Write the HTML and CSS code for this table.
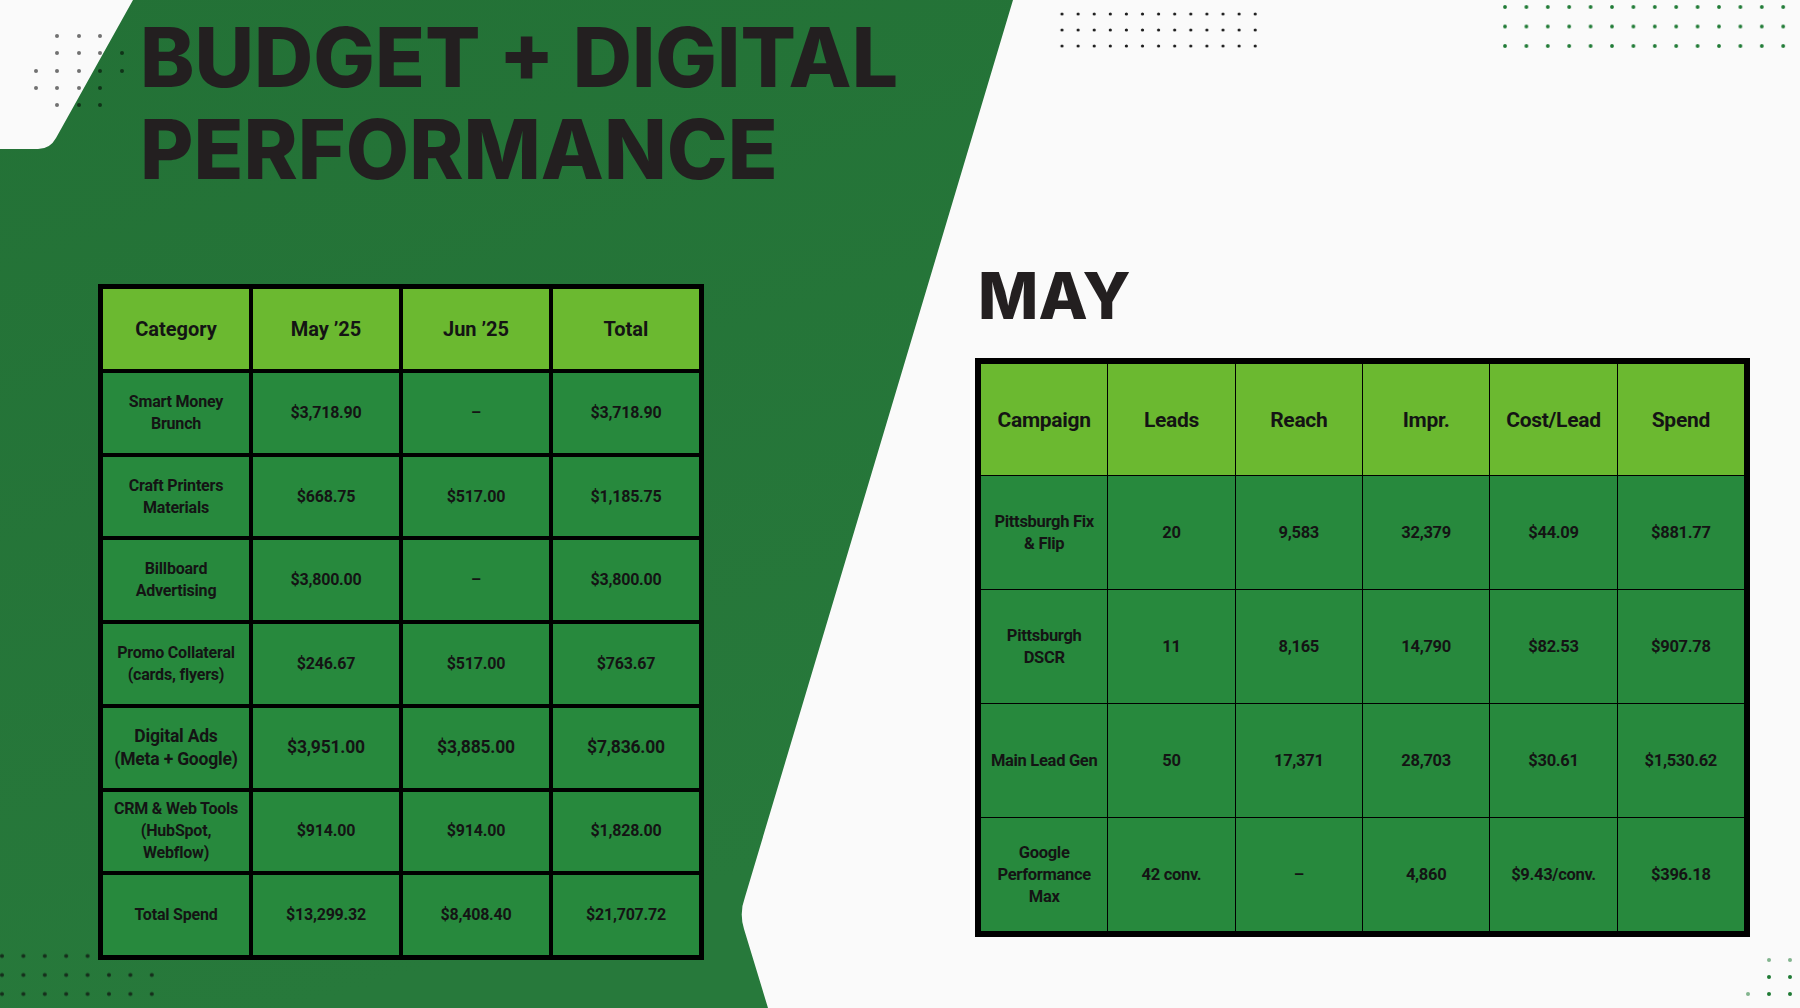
FILE: index.html
```html
<!DOCTYPE html>
<html lang="en">
<head>
<meta charset="utf-8">
<title>Budget + Digital Performance</title>
<link rel="stylesheet" href="styles.css">
</head>
<body>
<div class="slide">
  <svg class="bg" width="1800" height="1008" viewBox="0 0 1800 1008" aria-hidden="true">
    <defs>
      <linearGradient id="g" x1="0" y1="0" x2="0.3" y2="1">
        <stop offset="0" stop-color="#237136"/>
        <stop offset="1" stop-color="#27793b"/>
      </linearGradient>
      <pattern id="pm" x="1054" y="6" width="16.1" height="16" patternUnits="userSpaceOnUse"><circle cx="8" cy="8" r="1.6" fill="#1d1d1d"/></pattern>
      <pattern id="pr" x="1494.3" y="-2.75" width="21.4" height="19.5" patternUnits="userSpaceOnUse"><circle cx="10.7" cy="9.75" r="1.9" fill="#1f7a35"/></pattern>
      <pattern id="pb" x="-8.7" y="946.5" width="21.4" height="19" patternUnits="userSpaceOnUse"><circle cx="10.7" cy="9.5" r="2" fill="#152e1b"/></pattern>
    </defs>
    <path d="M133 0 L1013 0 L745 897 Q739 913 744 929 L768 1008 L0 1008 L0 149 L38 149 Q50 149 56 138 Z" fill="url(#g)"/>
    <g fill="#000" fill-opacity="0.55">
      <circle cx="57" cy="36" r="2"/><circle cx="79" cy="36" r="2"/><circle cx="100" cy="36" r="2"/>
      <circle cx="57" cy="53" r="2"/><circle cx="79" cy="53" r="2"/><circle cx="100" cy="53" r="2"/><circle cx="122" cy="53" r="2"/>
      <circle cx="36" cy="71" r="2"/><circle cx="57" cy="71" r="2"/><circle cx="79" cy="71" r="2"/><circle cx="100" cy="71" r="2"/><circle cx="122" cy="71" r="2"/>
      <circle cx="36" cy="88" r="2"/><circle cx="57" cy="88" r="2"/><circle cx="79" cy="88" r="2"/><circle cx="100" cy="88" r="2"/>
      <circle cx="57" cy="105" r="2"/><circle cx="79" cy="105" r="2"/><circle cx="100" cy="105" r="2"/>
    </g>
    <rect x="1054" y="6" width="209.3" height="48" fill="url(#pm)"/>
    <rect x="1494.3" y="-2.75" width="299.6" height="58.5" fill="url(#pr)"/>
    <rect x="-8.7" y="946.5" width="107" height="19" fill="url(#pb)"/>
    <rect x="-8.7" y="965.5" width="171.2" height="38" fill="url(#pb)"/>
    <g fill="#1f7a35">
      <circle cx="1769" cy="960" r="2" fill-opacity="0.55"/><circle cx="1790" cy="960" r="2" fill-opacity="0.55"/>
      <circle cx="1769" cy="977" r="2"/><circle cx="1790" cy="977" r="2"/>
      <circle cx="1748" cy="994" r="2" fill-opacity="0.55"/><circle cx="1769" cy="994" r="2"/><circle cx="1790" cy="994" r="2"/>
    </g>
  </svg>

  <div class="content">
    <section class="budget">
      <h1 class="title">BUDGET + DIGITAL<br>PERFORMANCE</h1>
      <div class="grid budget-table">
        <div class="cell head">Category</div>
        <div class="cell head">May ’25</div>
        <div class="cell head">Jun ’25</div>
        <div class="cell head">Total</div>

        <div class="cell">Smart Money<br>Brunch</div>
        <div class="cell">$3,718.90</div>
        <div class="cell">–</div>
        <div class="cell">$3,718.90</div>

        <div class="cell">Craft Printers<br>Materials</div>
        <div class="cell">$668.75</div>
        <div class="cell">$517.00</div>
        <div class="cell">$1,185.75</div>

        <div class="cell">Billboard<br>Advertising</div>
        <div class="cell">$3,800.00</div>
        <div class="cell">–</div>
        <div class="cell">$3,800.00</div>

        <div class="cell">Promo Collateral<br>(cards, flyers)</div>
        <div class="cell">$246.67</div>
        <div class="cell">$517.00</div>
        <div class="cell">$763.67</div>

        <div class="cell big">Digital Ads<br>(Meta + Google)</div>
        <div class="cell big">$3,951.00</div>
        <div class="cell big">$3,885.00</div>
        <div class="cell big">$7,836.00</div>

        <div class="cell">CRM &amp; Web Tools<br>(HubSpot,<br>Webflow)</div>
        <div class="cell">$914.00</div>
        <div class="cell">$914.00</div>
        <div class="cell">$1,828.00</div>

        <div class="cell">Total Spend</div>
        <div class="cell">$13,299.32</div>
        <div class="cell">$8,408.40</div>
        <div class="cell">$21,707.72</div>
      </div>
    </section>

    <section class="may">
      <h2 class="may-title">MAY</h2>
      <div class="grid camp-table">
        <div class="cell head">Campaign</div>
        <div class="cell head">Leads</div>
        <div class="cell head">Reach</div>
        <div class="cell head">Impr.</div>
        <div class="cell head">Cost/Lead</div>
        <div class="cell head">Spend</div>

        <div class="cell">Pittsburgh Fix<br>&amp; Flip</div>
        <div class="cell">20</div>
        <div class="cell">9,583</div>
        <div class="cell">32,379</div>
        <div class="cell">$44.09</div>
        <div class="cell">$881.77</div>

        <div class="cell">Pittsburgh<br>DSCR</div>
        <div class="cell">11</div>
        <div class="cell">8,165</div>
        <div class="cell">14,790</div>
        <div class="cell">$82.53</div>
        <div class="cell">$907.78</div>

        <div class="cell">Main Lead Gen</div>
        <div class="cell">50</div>
        <div class="cell">17,371</div>
        <div class="cell">28,703</div>
        <div class="cell">$30.61</div>
        <div class="cell">$1,530.62</div>

        <div class="cell">Google<br>Performance<br>Max</div>
        <div class="cell">42 conv.</div>
        <div class="cell">–</div>
        <div class="cell">4,860</div>
        <div class="cell">$9.43/conv.</div>
        <div class="cell">$396.18</div>
      </div>
    </section>
  </div>
</div>
</body>
</html>
```

FILE: styles.css
```css
* { box-sizing: border-box; }

body {
  margin: 0;
  background: #fafafa;
}

.slide {
  position: relative;
  width: 1800px;
  height: 1008px;
  overflow: hidden;
  font-family: Roboto, "Liberation Sans", sans-serif;
  color: #141414;
}

.bg {
  position: absolute;
  left: 0;
  top: 0;
}

.content {
  position: relative;
  display: flex;
  height: 100%;
}

.budget {
  flex: 0 0 975px;
  padding: 12px 0 0 98px;
}

.title {
  margin: 0 0 0 42px;
  height: 184px;
  font-family: Inter, "Liberation Sans", sans-serif;
  font-weight: 800;
  font-size: 82px;
  line-height: 92px;
  letter-spacing: 0;
  color: #231f20;
  white-space: nowrap;
}

.grid {
  display: grid;
  background: #000;
}

.cell {
  display: flex;
  align-items: center;
  justify-content: center;
  text-align: center;
  background: #27893d;
  font-size: 16px;
  font-weight: 700;
  line-height: 22px;
  letter-spacing: -0.2px;
}

.cell.head {
  background: #6bb930;
  font-weight: 700;
  letter-spacing: 0;
}

.budget-table {
  margin-top: 88px;
  width: 606px;
  height: 676px;
  padding: 5px;
  gap: 4px;
  grid-template-columns: repeat(4, 1fr);
  grid-template-rows: 80px repeat(7, 1fr);
}

.budget-table .cell.head {
  font-size: 20px;
}

.budget-table .cell.big {
  font-size: 17.5px;
  line-height: 23px;
}

.may {
  flex: 1;
  padding-top: 263px;
}

.may-title {
  margin: 0 0 29px 3px;
  font-family: Inter, "Liberation Sans", sans-serif;
  font-weight: 800;
  font-size: 64px;
  line-height: 66px;
  color: #231f20;
}

.camp-table {
  width: 775px;
  height: 579px;
  padding: 6px;
  gap: 1px;
  grid-template-columns: repeat(6, 1fr);
  grid-template-rows: 111px repeat(4, 1fr);
}

.camp-table .cell {
  font-size: 16.5px;
  letter-spacing: -0.3px;
}

.camp-table .cell.head {
  font-size: 21px;
  letter-spacing: -0.3px;
}
```
